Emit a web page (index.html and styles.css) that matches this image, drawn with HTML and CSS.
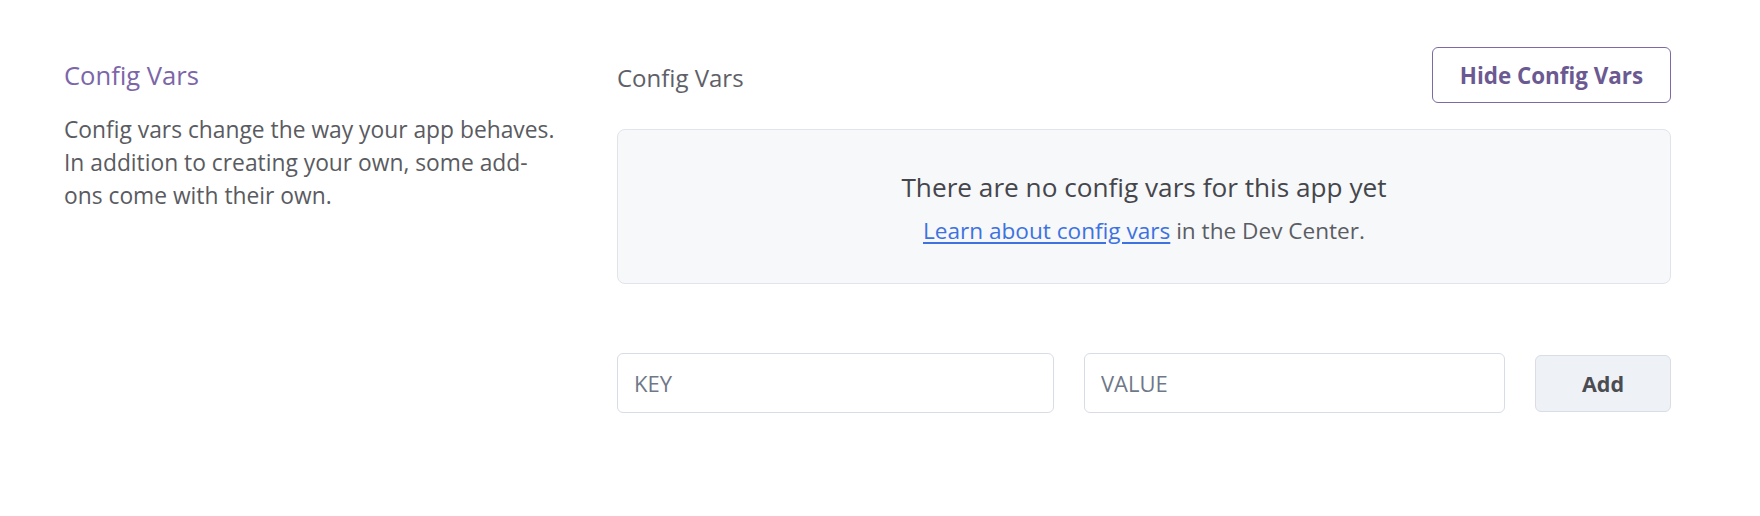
FILE: index.html
```html
<!DOCTYPE html>
<html lang="en">
<head>
<meta charset="utf-8">
<title>Config Vars</title>
<link rel="stylesheet" href="styles.css">
</head>
<body>
<section class="settings-section">
  <div class="section-info">
    <h2 class="section-title">Config Vars</h2>
    <p class="section-desc">Config vars change the way your app behaves. In addition to creating your own, some add-ons come with their own.</p>
  </div>
  <div class="section-main">
    <div class="main-header">
      <h3 class="main-title">Config Vars</h3>
      <button class="btn-outline" type="button">Hide Config Vars</button>
    </div>
    <div class="empty-box">
      <p class="empty-title">There are no config vars for this app yet</p>
      <p class="empty-sub"><a href="#" class="link">Learn about config vars</a> in the Dev Center.</p>
    </div>
    <form class="add-row">
      <input class="field" type="text" placeholder="KEY">
      <input class="field" type="text" placeholder="VALUE">
      <button class="btn-add" type="button">Add</button>
    </form>
  </div>
</section>
</body>
</html>
```

FILE: styles.css
```css
html, body {
  margin: 0;
  padding: 0;
  background: #ffffff;
}

body {
  width: 1760px;
  height: 516px;
  font-family: "Open Sans", "Noto Sans", sans-serif;
  color: #5b5d63;
}

.settings-section {
  display: flex;
  gap: 53px;
  padding: 47px 89px 0 64px;
}

.section-info {
  width: 500px;
  flex: none;
  padding-top: 10px;
}

.section-title {
  margin: 0;
  font-size: 25.6px;
  line-height: 38px;
  font-weight: 400;
  color: #7c66a8;
}

.section-desc {
  margin: 18px 0 0;
  font-size: 22.8px;
  line-height: 33px;
  color: #5a5b61;
}

.section-main {
  flex: 1;
  min-width: 0;
}

.main-header {
  display: flex;
  align-items: center;
  justify-content: space-between;
  height: 56px;
}

.main-title {
  margin: 0;
  padding-top: 6px;
  font-size: 24px;
  line-height: 36px;
  font-weight: 400;
  color: #5e6068;
}

.btn-outline {
  box-sizing: border-box;
  height: 56px;
  width: 239px;
  border: 1.5px solid #7d6aa3;
  border-radius: 6px;
  background: #ffffff;
  font-family: "Open Sans", "Noto Sans", sans-serif;
  font-size: 22.4px;
  font-weight: 700;
  color: #6b5a92;
  padding: 0;
}

.empty-box {
  box-sizing: border-box;
  margin-top: 26px;
  height: 155px;
  border: 1px solid #e1e4ec;
  border-radius: 8px;
  background: #f7f8fa;
  text-align: center;
  padding-top: 38px;
}

.empty-title {
  margin: 0;
  font-size: 26.2px;
  line-height: 38px;
  color: #45464c;
}

.empty-sub {
  margin: 7px 0 0;
  font-size: 22.6px;
  line-height: 36px;
  color: #5b5d63;
}

.link {
  color: #3d72e0;
  text-decoration: underline;
  text-underline-offset: 3px;
}

.add-row {
  display: grid;
  grid-template-columns: 437fr 421fr 136px;
  gap: 30px;
  align-items: center;
  margin: 69px 0 0;
}

.field {
  box-sizing: border-box;
  height: 60px;
  width: 100%;
  border: 1.5px solid #d8dce6;
  border-radius: 6px;
  background: #ffffff;
  padding: 0 16px;
  font-family: "Open Sans", "Noto Sans", sans-serif;
  font-size: 22px;
  font-weight: 500;
  color: #40424a;
}

.field::placeholder {
  color: #6f7888;
  opacity: 1;
}

.btn-add {
  box-sizing: border-box;
  height: 57px;
  width: 136px;
  border: 1.5px solid #d9dde6;
  border-radius: 6px;
  background: #eef1f6;
  font-family: "Open Sans", "Noto Sans", sans-serif;
  font-size: 21.5px;
  font-weight: 700;
  color: #4a4c52;
  padding: 0;
}
```
